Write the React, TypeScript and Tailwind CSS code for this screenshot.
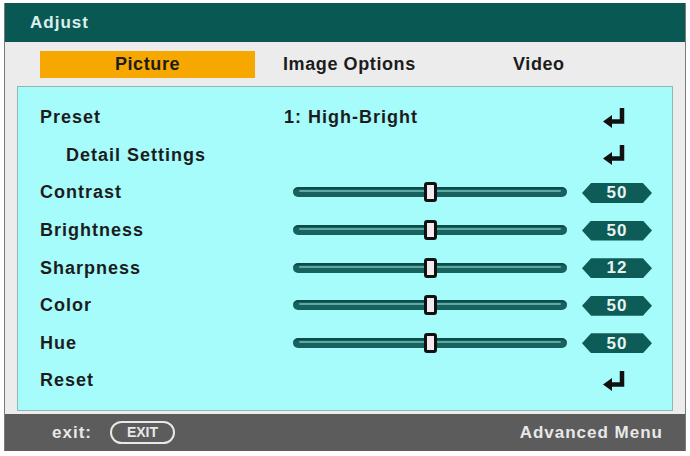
import React from "react";

const font = { fontFamily: '"Liberation Sans", Arial, sans-serif' };

function EnterIcon() {
  return (
    <svg width="24" height="20" viewBox="0 0 24 20" className="block">
      <path d="M19 0 V13.5 H7" fill="none" stroke="#111" strokeWidth="4.5" strokeLinejoin="miter" />
      <path d="M0 13.5 L9 7 V20 Z" fill="#111" />
    </svg>
  );
}

function Slider({ value }: { value: number }) {
  const pct = value === 12 ? 50 : value;
  return (
    <div className="relative h-[21px] w-[274px]">
      <div className="absolute left-0 right-0 top-[5px] h-[10px] rounded-full bg-[#17625f] border-t-[2px] border-[#0c4b48]">
        <div className="mx-[6px] mt-[1px] h-[2px] rounded-full bg-[#5aa9a5]" />
      </div>
      <div
        className="absolute top-0 h-[20px] w-[13px] -ml-[6px] rounded-[3px] border-[3px] border-[#111] bg-[#f3eaf0]"
        style={{ left: `${pct}%` }}
      />
    </div>
  );
}

function Badge({ value }: { value: number }) {
  return (
    <div
      className="flex h-[20px] w-[70px] items-center justify-center bg-[#0e5c57] text-[17px] font-bold tracking-[1px] text-[#e6f4f2]"
      style={{ clipPath: "polygon(13% 0, 87% 0, 100% 50%, 87% 100%, 13% 100%, 0 50%)" }}
    >
      {value}
    </div>
  );
}

type Row =
  | { label: string; indent?: boolean; kind: "enter"; text?: string }
  | { label: string; kind: "slider"; value: number };

const rows: Row[] = [
  { label: "Preset", kind: "enter", text: "1: High-Bright" },
  { label: "Detail Settings", kind: "enter", indent: true },
  { label: "Contrast", kind: "slider", value: 50 },
  { label: "Brightness", kind: "slider", value: 50 },
  { label: "Sharpness", kind: "slider", value: 12 },
  { label: "Color", kind: "slider", value: 50 },
  { label: "Hue", kind: "slider", value: 50 },
  { label: "Reset", kind: "enter" },
];

export default function App() {
  return (
    <div className="h-[456px] w-[690px] bg-white pt-[3px]" style={font}>
      <div className="ml-[4px] w-[682px] border-x border-[#7b7b7b]">
        <div className="flex h-[39px] items-center bg-[#0a5854] pl-[25px] text-[17px] font-bold tracking-[1px] text-[#dcefec]">
          Adjust
        </div>
        <div className="bg-[#ececec] px-[12px] pb-[3px]">
          <div className="flex h-[44px] items-center text-[18px] font-bold tracking-[0.6px] text-[#1c1c1c]">
            <div className="ml-[23px] flex h-[27px] w-[215px] items-center justify-center bg-[#f7a800]">
              Picture
            </div>
            <div className="ml-[28px] w-[230px]">Image Options</div>
            <div>Video</div>
          </div>
          <div className="border border-[#8fb7b5] bg-[#a6fbfb] pl-[22px] pt-[12px] pb-[10px]">
            {rows.map((r) => (
              <div key={r.label} className="flex h-[37.6px] items-center text-[18px] font-bold tracking-[1px] text-[#1c1c1c]">
                <div className={`w-[244px] ${r.kind === "enter" && r.indent ? "pl-[26px]" : ""}`}>{r.label}</div>
                {r.kind === "slider" ? (
                  <>
                    <div className="ml-[9px]">
                      <Slider value={r.value} />
                    </div>
                    <div className="ml-[15px]">
                      <Badge value={r.value} />
                    </div>
                  </>
                ) : (
                  <>
                    <div className="w-[319px]">{r.text ?? ""}</div>
                    <div>
                      <EnterIcon />
                    </div>
                  </>
                )}
              </div>
            ))}
          </div>
        </div>
        <div className="flex h-[37px] items-center bg-[#5c5c5c] pl-[47px] pr-[22px] text-[17px] font-bold tracking-[1px] text-[#e8e8e8]">
          <span>exit:</span>
          <span className="ml-[18px] flex h-[23px] w-[65px] items-center justify-center rounded-full border-[2px] border-[#e8e8e8] text-[14px] tracking-[0px]">
            EXIT
          </span>
          <span className="ml-auto">Advanced Menu</span>
        </div>
      </div>
    </div>
  );
}
